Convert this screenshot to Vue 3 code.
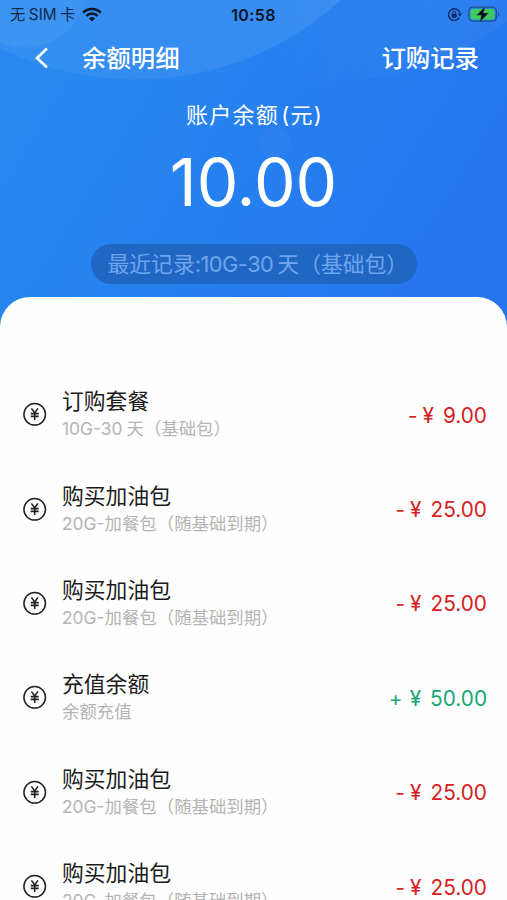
<template>
  <div class="page">
    <header class="hero">
      <svg class="hero-bg" viewBox="0 0 507 340" preserveAspectRatio="none">
        <defs>
          <linearGradient id="base" x1="0" y1="0" x2="1" y2="0.4">
            <stop offset="0" stop-color="#288bf0" />
            <stop offset="0.5" stop-color="#2682f0" />
            <stop offset="1" stop-color="#2675ee" />
          </linearGradient>
          <linearGradient id="arc" x1="0" y1="0" x2="1" y2="0">
            <stop offset="0.2" stop-color="#fff" stop-opacity="0.04" />
            <stop offset="1" stop-color="#fff" stop-opacity="0.1" />
          </linearGradient>
          <linearGradient id="arcRight" x1="0" y1="0" x2="1" y2="0">
            <stop offset="0.4" stop-color="#fff" stop-opacity="0" />
            <stop offset="0.7" stop-color="#fff" stop-opacity="0.04" />
            <stop offset="1" stop-color="#fff" stop-opacity="0.02" />
          </linearGradient>
        </defs>
        <rect width="507" height="340" fill="url(#base)" />
        <circle cx="325" cy="-215" r="299" fill="url(#arcRight)" />
        <circle cx="135" cy="-217" r="299" fill="url(#arc)" />
        <circle cx="25" cy="-12" r="61" fill="#fff" fill-opacity="0.05" />
        <circle cx="275" cy="147" r="16" fill="#6a8cf5" fill-opacity="0.12" />
      </svg>

      <div class="status">
        <div class="status-left">
          <span class="carrier">无<i>SIM</i>卡</span>
          <svg width="20" height="15" viewBox="0 0 20 15" fill="none" stroke="#0b1526">
            <path d="M1.2 5.6a12.6 12.6 0 0 1 17.6 0" stroke-width="2.7" />
            <path d="M4.4 8.9a8 8 0 0 1 11.2 0" stroke-width="2.5" />
            <path d="M10 14.4 7 11.4a4.3 4.3 0 0 1 6 0z" fill="#0b1526" stroke="none" />
          </svg>
        </div>
        <span class="clock">10:58</span>
        <div class="status-right">
          <svg width="15" height="15" viewBox="0 0 15 15" fill="none" stroke="#10285c">
            <path d="M12.3 10.6A5.8 5.8 0 1 1 12.9 6" stroke-width="1.4" />
            <path d="M10.8 6.4h4l-2 3z" fill="#10285c" stroke="none" />
            <rect x="4.7" y="6.8" width="5" height="3.9" rx="0.6" fill="#10285c" stroke="none" />
            <path d="M5.7 7V5.8a1.5 1.5 0 0 1 3 0V7" stroke-width="1" />
          </svg>
          <svg width="32" height="17" viewBox="0 0 32 17">
            <rect x="0.8" y="1.2" width="27.6" height="14" rx="4" fill="none" stroke="#1d4f8f" stroke-width="1.3" />
            <rect x="2.6" y="3" width="24" height="10.4" rx="2.2" fill="#3ccb5c" />
            <path d="M30 6v4.6c1.3-.6 1.3-4 0-4.6z" fill="#1d4f8f" />
            <path d="M17.3.6 8.4 9.3h5L11.7 16l9-8.9h-5.2z" fill="#080f18" stroke="#2f9c60" stroke-width="0.4" />
          </svg>
        </div>
      </div>

      <nav class="nav">
        <svg class="back" width="14" height="22" viewBox="0 0 14 22" fill="none">
          <path d="M12 1.5 2 11l10 9.5" stroke="#fff" stroke-width="2.6" />
        </svg>
        <span class="nav-title">余额明细</span>
        <span class="nav-link">订购记录</span>
      </nav>

      <div class="label">账户余额<span class="unit">(元)</span></div>
      <div class="balance">{{ balance }}</div>
      <div class="recent">
        最近记录<span class="plan">:10G-30</span><span class="thin-gap">天（基础包）</span>
      </div>
    </header>

    <main class="sheet">
      <div v-for="(item, index) in records" :key="index" class="row">
        <svg class="coin" width="24" height="24" viewBox="0 0 24 24" fill="none" stroke="#222">
          <circle cx="11.7" cy="12.3" r="10.8" stroke-width="1.5" />
          <path d="M8.4 6.4 11.7 11l3.3-4.6M11.7 10.8V18M7.7 11.6h8M7.7 14.4h8" stroke-width="1.6" />
        </svg>
        <div class="info">
          <div class="name">{{ item.name }}</div>
          <div class="desc">
            {{ item.plan }}<span :class="{ 'thin-gap': item.spaced }">{{ item.desc }}</span>
          </div>
        </div>
        <div class="amount" :class="{ income: item.income }">
          <span class="sign">{{ item.income ? "+" : "-" }}</span>
          <span class="yen">¥</span>
          <span>{{ item.amount }}</span>
        </div>
      </div>
    </main>
  </div>
</template>

<script setup>
import { ref } from "vue";

const balance = ref("10.00");

const fuel = {
  name: "购买加油包",
  plan: "20G-",
  desc: "加餐包（随基础到期）",
  amount: "25.00",
};

const records = ref([
  {
    name: "订购套餐",
    plan: "10G-30",
    desc: "天（基础包）",
    spaced: true,
    amount: "9.00",
  },
  { ...fuel },
  { ...fuel },
  {
    name: "充值余额",
    plan: "",
    desc: "余额充值",
    amount: "50.00",
    income: true,
  },
  { ...fuel },
  { ...fuel },
]);
</script>

<style>
body {
  margin: 0;
  overflow: hidden;
}
</style>

<style scoped>
.page {
  height: 900px;
  overflow: hidden;
  background: #fefefe;
  font-family: Inter, "Noto Sans CJK SC", sans-serif;
}

.hero {
  position: relative;
  display: flex;
  flex-direction: column;
  align-items: center;
  height: 330px;
  color: #fff;
}

.hero-bg {
  position: absolute;
  inset: 0;
  width: 100%;
  height: 100%;
}

.hero > :not(.hero-bg) {
  position: relative;
}

.status {
  display: grid;
  grid-template-columns: 1fr auto 1fr;
  align-items: center;
  box-sizing: border-box;
  width: 100%;
  height: 29px;
  padding: 0 7px 0 10px;
  color: #0b1526;
}

.status-left,
.status-right {
  display: flex;
  align-items: center;
}

.status-left {
  gap: 7px;
}

.status-right {
  justify-content: flex-end;
  gap: 6px;
}

.carrier {
  font-size: 15.3px;
  line-height: 20px;
  color: #132a50;
}

.carrier i {
  margin: 0 3.5px;
  font-style: normal;
}

.clock {
  margin-right: 3px;
  font-size: 16px;
  font-weight: 600;
  letter-spacing: 0.4px;
}

.nav {
  display: flex;
  align-items: center;
  box-sizing: border-box;
  width: 100%;
  height: 58px;
  padding: 0 28px 0 35px;
  font-size: 24.4px;
  font-weight: 500;
  line-height: 36px;
}

.nav-title,
.nav-link {
  padding-bottom: 1px;
}

.nav-title {
  margin-left: 33px;
}

.nav-link {
  margin-left: auto;
}

.label {
  margin-top: 11px;
  padding-left: 2px;
  font-size: 22px;
  line-height: 34px;
  letter-spacing: 1.3px;
}

.unit {
  margin-left: 2px;
}

.balance {
  margin-top: 10px;
  font-size: 66px;
  line-height: 80px;
}

.recent {
  box-sizing: border-box;
  width: 326px;
  height: 40px;
  margin-top: 22px;
  padding-left: 17px;
  border-radius: 20px;
  background: #2067c3;
  color: #6ea5ee;
  font-size: 21.8px;
  line-height: 40px;
  white-space: nowrap;
}

.plan {
  letter-spacing: -0.5px;
}

.thin-gap {
  margin-left: 4px;
}

.sheet {
  position: relative;
  height: 603px;
  margin-top: -33px;
  padding: 70px 20px 0 23px;
  box-sizing: border-box;
  overflow: hidden;
  border-radius: 30px 30px 0 0;
  background: #fefefe;
}

.row {
  display: flex;
  align-items: center;
  height: 94.4px;
}

.info {
  margin-left: 15px;
}

.name {
  color: #1c1c1c;
  font-size: 21.8px;
  line-height: 30px;
}

.desc {
  color: #b4b4b4;
  font-size: 17.4px;
  line-height: 26px;
}

.amount {
  display: flex;
  align-items: center;
  margin-left: auto;
  padding-top: 2px;
  color: #d4201f;
  font-size: 20.8px;
}

.sign {
  margin-right: 5px;
}

.yen {
  margin-right: 9px;
}

.amount.income {
  color: #17a673;
}

.income .sign {
  margin-right: 7px;
}
</style>
